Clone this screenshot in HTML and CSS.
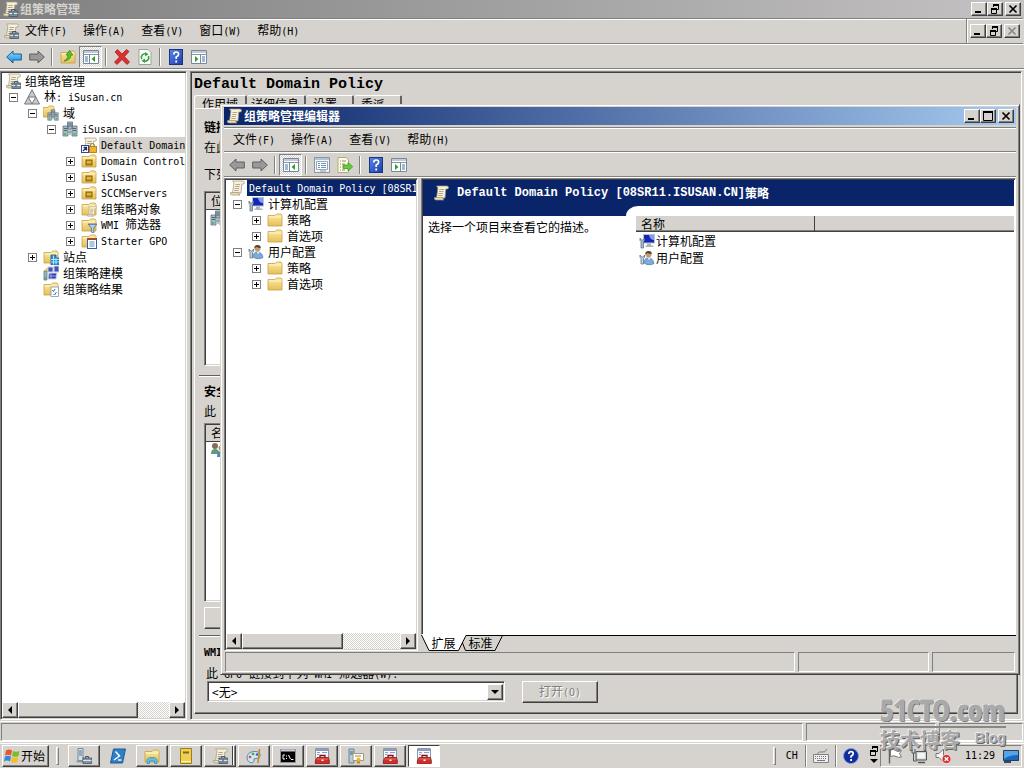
FILE: index.html
```html
<!DOCTYPE html>
<html lang="zh-CN">
<head>
<meta charset="utf-8">
<title>组策略管理</title>
<link rel="stylesheet" href="styles.css">
</head>
<body>
<svg class="defs" aria-hidden="true">
  <defs>
    <linearGradient id="gBlue" x1="0" y1="0" x2="0" y2="1"><stop offset="0" stop-color="#8fe0ff"/><stop offset="1" stop-color="#1a86d8"/></linearGradient>
    <linearGradient id="gFold" x1="0" y1="0" x2="0" y2="1"><stop offset="0" stop-color="#fdeba4"/><stop offset="1" stop-color="#e6bf58"/></linearGradient>
    <linearGradient id="gHelp" x1="0" y1="0" x2="1" y2="1"><stop offset="0" stop-color="#5b84ea"/><stop offset="1" stop-color="#1b3ea8"/></linearGradient>
  </defs>
  <symbol id="scroll" viewBox="0 0 16 16">
    <path d="M3.500 1h10.500q1.500 0 1.500 1.500t-1.500 1.500h-1.200L12 13H3.500L4.800 4Q5 1.800 3.500 1z" fill="#f8f0d8" stroke="#a0977c" stroke-width=".7"/>
    <path d="M1.500 12.500H10q-.5 2.500 1 2.500H3q-2 0-1.500-2.500z" fill="#eadcb0" stroke="#a0977c" stroke-width=".7"/>
    <path d="M6.500 4.500H11M6 6.500h4.500M5.600 8.500H10M5.200 10.500h4.500" stroke="#b0a892"/>
  </symbol>
  <symbol id="gpm" viewBox="0 0 16 16">
    <use href="#scroll"/>
    <path d="M9.500 10V8.500h3.500V10" fill="none" stroke="#4a5663"/>
    <rect x="7" y="10" width="8.500" height="5.500" fill="#7b8c9d" stroke="#4a5663" stroke-width=".8"/>
    <path d="M7 12.500h8.500" stroke="#dce4ea"/><path d="M11 11.500v2" stroke="#303a44"/>
  </symbol>
  <symbol id="folder" viewBox="0 0 16 16">
    <path d="M1 3.500h7l1.500-1.500h4.500l1 1.500V14H1z" fill="url(#gFold)" stroke="#c79f45" stroke-width=".8"/>
    <path d="M1.500 5h13" stroke="#fff6cc"/>
  </symbol>
  <symbol id="ou" viewBox="0 0 16 16"><use href="#folder"/><rect x="5" y="7" width="6" height="5" fill="#c49319" stroke="#8a6510"/><path d="M6 9h4" stroke="#f5da7c"/></symbol>
  <symbol id="servers" viewBox="0 0 16 16">
    <g fill="#a8bac4" stroke="#5d7382" stroke-width=".8"><path d="M5.500 1h5v7h-5zM1 5h5v10H1zM10 5h5v10h-5z"/></g>
    <path d="M6 3h4M6 5h4M2 7.500h3M2 9.500h3M11 7.500h3M11 9.500h3" stroke="#4d6776"/>
    <path d="M6 11h4M8 8v6" stroke="#708a98"/><circle cx="3" cy="13" r="1" fill="#2fbb3e"/><circle cx="12.500" cy="13" r="1" fill="#2fbb3e"/>
  </symbol>
  <symbol id="domains" viewBox="0 0 16 16">
    <path d="M0 2.500h5l1-1.500h4l1 1.500V12H0z" fill="url(#gFold)" stroke="#c79f45" stroke-width=".8"/>
    <svg x="4" y="4" width="12" height="12"><use href="#servers"/></svg>
  </symbol>
  <symbol id="forest" viewBox="0 0 16 16">
    <path d="M8 .7L15.500 15H.5z" fill="#c6cacd" stroke="#73797e"/><path d="M4.300 8h7.400L8 14.800z" fill="#fff" stroke="#73797e"/>
  </symbol>
  <symbol id="link" viewBox="0 0 16 16">
    <use href="#scroll"/><rect x=".5" y="8.500" width="7" height="7" fill="#fff" stroke="#3a4680"/><path d="M2 14l3-3M2.500 10.500h3V13.500" stroke="#1d2d86" stroke-width="1.300" fill="none"/>
    <path d="M9.500 10V8.500q0-2 2-2t2 2V10" fill="none" stroke="#8a8168"/><rect x="8.500" y="9.500" width="7" height="6" fill="#f0b429" stroke="#a86f10" stroke-width=".8"/>
  </symbol>
  <symbol id="gpos" viewBox="0 0 16 16"><use href="#folder"/><svg x="5" y="5" width="11" height="11"><use href="#scroll"/></svg></symbol>
  <symbol id="filter" viewBox="0 0 16 16"><use href="#folder"/><path d="M7 7h9l-3.200 4v5l-2.500-1v-4z" fill="#b8cfe4" stroke="#4c6f96" stroke-width=".8"/><path d="M7.500 7.500h8" stroke="#6288b5"/></symbol>
  <symbol id="starter" viewBox="0 0 16 16"><use href="#folder"/><rect x="6.500" y="5.500" width="9" height="10" fill="#fff" stroke="#2d62b0"/><path d="M6.500 6h9" stroke="#a44a2a" stroke-width="2"/><path d="M8.500 9h5M8.500 11h5M8.500 13h5" stroke="#5a8bd0"/></symbol>
  <symbol id="sites" viewBox="0 0 16 16"><use href="#folder"/><path d="M8 6h5v3h3v7H8z" fill="#1f93d8" stroke="#1560a0" stroke-width=".8"/><path d="M10.500 6.500v9M13 9v6.500M8 10.500h8M8 13h8" stroke="#d6f0ff" stroke-width=".8"/></symbol>
  <symbol id="model" viewBox="0 0 16 16"><path d="M1 5l4-3 3 1v4z" fill="#f0cd68"/><path d="M5 2h5v5H5zM11 1h5v6h-5z" fill="#4553b8" stroke="#c8d0dc"/><path d="M1 6h3v9H1z" fill="#a4b4be" stroke="#5d7382" stroke-width=".8"/><path d="M6 8h8l-1 6H5z" fill="#3040b0" stroke="#d0d8e4"/><path d="M8 8v6M5 11h8" stroke="#98a8e4"/><circle cx="2.500" cy="13" r="1" fill="#2fbb3e"/></symbol>
  <symbol id="result" viewBox="0 0 16 16"><use href="#folder"/><rect x="8" y="6" width="7.500" height="9.500" fill="#fff" stroke="#8496a8" stroke-width=".8"/><path d="M9.500 9l1 1.500L12 8M10.500 13l1 1 2-3" fill="none" stroke="#2f74bb"/></symbol>
  <symbol id="computer" viewBox="0 0 16 16"><rect x="4.500" y="1.500" width="11" height="8.500" fill="#1425b8" stroke="#b9c3d0"/><path d="M10 2h5v5q-4 0-5-5z" fill="#7f9ff6"/><path d="M8 10.500h4v2h2.500v1.500h-8v-1.500H8z" fill="#a9b3bc"/><path d="M1 5v2.500l1 1V15h2.500V8.500l1-1V5L4.300 7H2.300z" fill="#a9bccb" stroke="#50697d" stroke-width=".7"/></symbol>
  <symbol id="user" viewBox="0 0 16 16"><circle cx="9.500" cy="4.500" r="3" fill="#c99a6c"/><path d="M6.300 4.500Q6 1 9.500 1t3.200 3Q10 4 8.500 3z" fill="#53432f"/><path d="M5 13q0-5 4.500-5t5.500 5.500Q12 15.500 8 14.500z" fill="#7cabd8" stroke="#4a79ab" stroke-width=".7"/><path d="M9 8l1 2 1.500-2z" fill="#fff"/><path d="M1 5v2.500l1 1V14h2.500V8.500l1-1V5L4.300 7H2.300z" fill="#c1d3de" stroke="#50697d" stroke-width=".7"/></symbol>
  <symbol id="users" viewBox="0 0 16 16"><circle cx="5" cy="4" r="3" fill="#8a6a58"/><path d="M1 12q0-5 4-5t5 5z" fill="#5f9a7c"/><circle cx="11" cy="6" r="2.500" fill="#b98a60"/><path d="M7 15q0-6 4-6t4 6z" fill="#4f86c0"/></symbol>
  <symbol id="back" viewBox="0 0 16 16"><path d="M.7 8L7 2V5h8.300v6H7v3z" fill="url(#gBlue)" stroke="#11609e"/></symbol>
  <symbol id="backoff" viewBox="0 0 16 16"><path d="M.7 8L7 2V5h8.300v6H7v3z" fill="#999" stroke="#5e5e5e"/></symbol>
  <symbol id="fwdoff" viewBox="0 0 16 16"><path d="M15.300 8L9 2V5H.7v6H9v3z" fill="#999" stroke="#5e5e5e"/></symbol>
  <symbol id="up" viewBox="0 0 16 16"><use href="#folder"/><path d="M4 12q4-1 4-6H6l3.500-4.500L13 6h-2q0 5-7 6z" fill="#53c42c" stroke="#2a851a" stroke-width=".7"/></symbol>
  <symbol id="paneL" viewBox="0 0 16 16"><path d="M.5 1.500h15v13H.5z" fill="#fff" stroke="#7a8796"/><path d="M1 3h14M1 5.500h14" stroke="#8297ae"/><path d="M6.500 6v8" stroke="#7a8796"/><path d="M2 8h3M2 10h3M2 12h3" stroke="#3e72b0"/><path d="M12 7v6L8.500 10z" fill="#2ba32b"/></symbol>
  <symbol id="paneR" viewBox="0 0 16 16"><path d="M.5 1.500h15v13H.5z" fill="#fff" stroke="#7a8796"/><path d="M1 3h14M1 5.500h14" stroke="#8297ae"/><path d="M9.500 6v8" stroke="#7a8796"/><path d="M11 8h3M11 10h3M11 12h3" stroke="#3e72b0"/><path d="M4 7v6l3.500-3z" fill="#2ba32b"/></symbol>
  <symbol id="del" viewBox="0 0 16 16"><path d="M1 3l2.500-2.500L8 5l4.500-4.500L15 2.500 10.500 7.500 15.500 13 13 15.500 8 10.500 3 15.500 .5 13l5-5z" fill="#dd2e32" stroke="#9d1518" stroke-width=".7"/></symbol>
  <symbol id="refresh" viewBox="0 0 16 16"><path d="M2 .5h9L14 3.500v12H2z" fill="#fff" stroke="#9aa39a"/><path d="M4.800 10A3.500 3.500 0 0 1 9 5M11.300 7A3.500 3.500 0 0 1 6.500 11.700" fill="none" stroke="#33a53b" stroke-width="1.600"/><path d="M8 3l3.500 2.200L8.300 7.500zM8 9.500v4.500L4.500 11.800z" fill="#33a53b"/></symbol>
  <symbol id="help" viewBox="0 0 16 16"><rect x="1.500" y=".5" width="13" height="15" fill="url(#gHelp)" stroke="#183582"/><path d="M5.800 5.500Q5.800 3 8.200 3t2.400 2.200Q10.600 6.800 8.200 8v2" fill="none" stroke="#fff" stroke-width="1.700"/><path d="M7.300 11.500h1.800v2H7.300z" fill="#fff"/></symbol>
  <symbol id="props" viewBox="0 0 16 16"><path d="M.5 .5h15v15H.5z" fill="#f1f5f8" stroke="#8996a3"/><path d="M1 2h14" stroke="#b4c4d2" stroke-width="2"/><path d="M2.500 4.500h11v8h-11z" fill="#fff" stroke="#9aa8b4"/><path d="M4 6.500h2M7 6.500h5M4 8.500h2M7 8.500h5M4 10.500h2M7 10.500h5" stroke="#6398c6"/><path d="M6 14h6" stroke="#8996a3"/></symbol>
  <symbol id="export" viewBox="0 0 16 16"><path d="M1 .5h8L11.500 3v12.500H1z" fill="#fffbe4" stroke="#b3a97e"/><path d="M3 4h1M5 4h4M3 7h1M5 7h3M3 10h1M3 13h1M5 13h3" stroke="#8a8a70"/><path d="M6 8h5V5.500l4.800 4.200L11 14v-2.500H6z" fill="#67cc38" stroke="#32901e" stroke-width=".7"/></symbol>
  <symbol id="flagwin" viewBox="0 0 16 16"><path d="M2 2.500q3-2 6 0L7 7.500q-3-1.500-6 0z" fill="#e9562b"/><path d="M9 3q3 1.500 6.500 0l-1 5q-3 1.500-6.500 0z" fill="#7dba2d"/><path d="M1 8.500q3-1.500 6 0L6 13.500q-3-2-6 0z" fill="#3388dd"/><path d="M8 9q3 1.500 6.300 0l-1 5q-3 1.500-6.300 0z" fill="#f7bd22"/></symbol>
  <symbol id="srvbox" viewBox="0 0 16 16"><path d="M2 .5h5v12H2z" fill="#d4dfe8" stroke="#74889a"/><path d="M3 3h3M3 5h3M3 7h3" stroke="#54728c"/><path d="M.5 13.500h8" stroke="#8798a8" stroke-width="2"/><path d="M9.500 10V8.500h3V10" fill="none" stroke="#4a5663"/><rect x="7" y="10" width="8.500" height="5.500" fill="#8496a6" stroke="#4a5663" stroke-width=".8"/><path d="M7 12.500h8.500" stroke="#dce4ea"/></symbol>
  <symbol id="shell" viewBox="0 0 16 16"><path d="M3.500 1h12L12.500 15H.5z" fill="#2e7fc8" stroke="#1c5a97"/><path d="M5.500 3.500L9.500 8 4 12" fill="none" stroke="#fff" stroke-width="1.500"/><path d="M8 12h3.500" stroke="#fff" stroke-width="1.400"/></symbol>
  <symbol id="explorer" viewBox="0 0 16 16"><use href="#folder"/><path d="M3 15.500v-3q0-3 5-3t5 3v3h-2.500v-2.500h-5v2.500z" fill="#62c0e4" stroke="#2d86b0" stroke-width=".7"/></symbol>
  <symbol id="book" viewBox="0 0 16 16"><path d="M2.500 .5h11v15h-11z" fill="#efcf52" stroke="#9d7d1c"/><path d="M5 4.500h6" stroke="#7e6824" stroke-width="2"/><path d="M3 13.500h10" stroke="#fff4b0"/></symbol>
  <symbol id="paint" viewBox="0 0 16 16"><path d="M1 10Q1 4 8 3.500t6 5q-1 2.500-4 2t-2 2.500q-1 3-4 1.500T1 10z" fill="#cfe5f3" stroke="#5d8cab"/><circle cx="4" cy="9" r="1.300" fill="#df4535"/><circle cx="7" cy="6" r="1.300" fill="#45a53e"/><circle cx="11" cy="6.500" r="1.200" fill="#375fc0"/><path d="M12 15l1.500-14" stroke="#c88732" stroke-width="1.600"/></symbol>
  <symbol id="cmd" viewBox="0 0 16 16"><path d="M.5 1.500h15v13H.5z" fill="#000" stroke="#8d9298"/><path d="M1 2.500h14" stroke="#c8ccd4" stroke-width="2"/><path d="M5 7H3v4h2M6.500 7.500v1M6.500 10v1M8.500 7l2 4M11 11.500h2.500" fill="none" stroke="#fff"/></symbol>
  <symbol id="mmc" viewBox="0 0 16 16"><path d="M1.500 .5h13v12h-13z" fill="#f6f8fc" stroke="#8c99ad"/><path d="M2 2h12" stroke="#8c9dc0" stroke-width="2"/><path d="M3 4.500h3M8 4.500h5M3 6.500h2" stroke="#8c9dc0"/><path d="M6 9.500V7.500h5v2" fill="none" stroke="#7d1111" stroke-width="1.300"/><path d="M3 9.500h11.500q1.200 3 .8 6H1.200q-.4-3 1.800-6z" fill="#cf2e2b" stroke="#8e1515" stroke-width=".8"/><path d="M2.500 11h12" stroke="#e86a60"/><path d="M7.500 11.500h2v1.500h-2z" fill="#fff"/></symbol>
  <symbol id="cert" viewBox="0 0 16 16"><path d="M1 1h5v14H1z" fill="#b9cbd8" stroke="#698496"/><path d="M2 4h3M2 6h3" stroke="#456478"/><path d="M5 5.500h10.500v7H5z" fill="#fffdf0" stroke="#a19b79"/><path d="M7 8h6" stroke="#888"/><path d="M9 12v4l1.500-1 1.500 1v-4" fill="#d3861b"/><circle cx="10.500" cy="11.500" r="2" fill="#f1b42e"/></symbol>
  <symbol id="keyboard" viewBox="0 0 16 16"><path d="M.5 6.500h15v8H.5z" fill="#eee" stroke="#828282"/><path d="M2 8.500h12M2 10.500h12" stroke="#777" stroke-dasharray="1 1"/><path d="M4 12.500h8" stroke="#777"/><path d="M4 6Q6 3 9 4t5-3" fill="none" stroke="#828282"/></symbol>
  <symbol id="qball" viewBox="0 0 16 16"><circle cx="8" cy="8" r="7.500" fill="#102c9c" stroke="#7e96dc"/><path d="M5.800 6Q5.800 3.700 8 3.700t2.200 2Q10.200 7 8 8.200v1.500" fill="none" stroke="#fff" stroke-width="1.700"/><path d="M7.200 11H9v2H7.200z" fill="#fff"/></symbol>
  <symbol id="tflag" viewBox="0 0 16 16"><path d="M2.500 1v14.500" stroke="#666" stroke-width="1.500"/><path d="M3.500 2q3-1.500 5 .5t6 0L12.500 5.500 14.500 9q-3 1-5.500-.5T3.500 8.500z" fill="#fff" stroke="#777"/></symbol>
  <symbol id="net" viewBox="0 0 16 16"><path d="M5 3.500h10.500v8.500H5z" fill="#ccd1d4" stroke="#555"/><path d="M6.500 5h7.500v5.500H6.500z" fill="#f3f3f3"/><path d="M7 14.500h7" stroke="#555" stroke-width="1.500"/><path d="M1 1v4h3V1M2.500 5v8H6" fill="none" stroke="#555"/></symbol>
  <symbol id="mute" viewBox="0 0 16 16"><path d="M1 5.500h3L8.500 1v13L4 9.500H1z" fill="#f4f4f4" stroke="#777"/><circle cx="11.500" cy="11" r="4.500" fill="#dc2c2c" stroke="#fff" stroke-width=".7"/><path d="M9.700 9.200l3.600 3.600M13.300 9.200l-3.600 3.600" stroke="#fff" stroke-width="1.500"/></symbol>
  <symbol id="desk" viewBox="0 0 16 16"><path d="M.5 2.500h15v10H.5z" fill="#1868c0" stroke="#233c5c"/><path d="M1 3h14v4Q6 7 1 11z" fill="#56a5e6"/><path d="M1 12.500h7v2.500H1z" fill="#314b63"/></symbol>
  <symbol id="min" viewBox="0 0 10 10"><path d="M1 8h6" stroke="#000" stroke-width="2"/></symbol>
  <symbol id="max" viewBox="0 0 10 10"><path d="M.5 1h9v8.500h-9z" fill="none" stroke="#000"/><path d="M0 1h10" stroke="#000" stroke-width="2"/></symbol>
  <symbol id="restore" viewBox="0 0 10 10"><path d="M3.500 3V1h5v4.500H7" fill="none" stroke="#000"/><path d="M3 1h6" stroke="#000" stroke-width="2"/><path d="M1.500 4.500h5v5h-5z" fill="none" stroke="#000"/><path d="M1 5h6" stroke="#000" stroke-width="2"/></symbol>
  <symbol id="close" viewBox="0 0 10 10"><path d="M1.500 1.500l7 7M8.500 1.500l-7 7" stroke="currentColor" stroke-width="1.700"/></symbol>
  <symbol id="left" viewBox="0 0 10 10"><path d="M7 1v8L3 5z"/></symbol>
  <symbol id="right" viewBox="0 0 10 10"><path d="M3 1v8l4-4z"/></symbol>
  <symbol id="down" viewBox="0 0 10 10"><path d="M1 3h8L5 7z"/></symbol>
</svg>

<div class="app">
  <header class="titlebar inactive">
    <svg class="i"><use href="#gpm"/></svg><h1>组策略管理</h1>
    <div class="wbtns"><button class="wb" aria-label="最小化"><svg><use href="#min"/></svg></button><button class="wb" aria-label="还原"><svg><use href="#restore"/></svg></button><button class="wb last" aria-label="关闭"><svg><use href="#close"/></svg></button></div>
  </header>
  <nav class="menubar main-menu">
    <svg class="i"><use href="#gpm"/></svg>
    <button>文件<span class="en">(F)</span></button><button>操作<span class="en">(A)</span></button><button>查看<span class="en">(V)</span></button><button>窗口<span class="en">(W)</span></button><button>帮助<span class="en">(H)</span></button>
    <div class="wbtns mdi"><button class="wb" aria-label="最小化"><svg><use href="#min"/></svg></button><button class="wb" aria-label="还原"><svg><use href="#restore"/></svg></button><button class="wb last" aria-label="关闭" disabled><svg><use href="#close"/></svg></button></div>
  </nav>
  <div class="toolbar">
    <button aria-label="后退"><svg class="i"><use href="#back"/></svg></button><button aria-label="前进"><svg class="i"><use href="#fwdoff"/></svg></button><span class="sep"></span>
    <button aria-label="向上"><svg class="i"><use href="#up"/></svg></button><button class="on" aria-label="控制台树"><svg class="i"><use href="#paneL"/></svg></button><span class="sep"></span>
    <button aria-label="删除"><svg class="i"><use href="#del"/></svg></button><button aria-label="刷新"><svg class="i"><use href="#refresh"/></svg></button><span class="sep"></span>
    <button aria-label="帮助"><svg class="i"><use href="#help"/></svg></button><button aria-label="操作窗格"><svg class="i"><use href="#paneR"/></svg></button>
  </div>

  <main class="work">
    <section class="treepane sunken">
      <ul class="tree root">
        <li><div class="row"><svg class="i"><use href="#gpm"/></svg><span class="t">组策略管理</span></div>
          <ul>
            <li><div class="row"><button class="ex minus" aria-label="折叠"></button><svg class="i"><use href="#forest"/></svg><span class="t">林<span class="en">: iSusan.cn</span></span></div>
              <ul>
                <li><div class="row"><button class="ex minus" aria-label="折叠"></button><svg class="i"><use href="#domains"/></svg><span class="t">域</span></div>
                  <ul>
                    <li><div class="row"><button class="ex minus" aria-label="折叠"></button><svg class="i"><use href="#servers"/></svg><span class="t en">iSusan.cn</span></div>
                      <ul>
                        <li><div class="row"><span class="ex none"></span><svg class="i"><use href="#link"/></svg><span class="t en soft">Default Domain Policy</span></div></li>
                        <li><div class="row"><button class="ex" aria-label="展开"></button><svg class="i"><use href="#ou"/></svg><span class="t en">Domain Controllers</span></div></li>
                        <li><div class="row"><button class="ex" aria-label="展开"></button><svg class="i"><use href="#ou"/></svg><span class="t en">iSusan</span></div></li>
                        <li><div class="row"><button class="ex" aria-label="展开"></button><svg class="i"><use href="#ou"/></svg><span class="t en">SCCMServers</span></div></li>
                        <li><div class="row"><button class="ex" aria-label="展开"></button><svg class="i"><use href="#gpos"/></svg><span class="t">组策略对象</span></div></li>
                        <li><div class="row"><button class="ex" aria-label="展开"></button><svg class="i"><use href="#filter"/></svg><span class="t"><span class="en">WMI </span>筛选器</span></div></li>
                        <li><div class="row"><button class="ex" aria-label="展开"></button><svg class="i"><use href="#starter"/></svg><span class="t en">Starter GPO</span></div></li>
                      </ul></li>
                  </ul></li>
                <li><div class="row"><button class="ex" aria-label="展开"></button><svg class="i"><use href="#sites"/></svg><span class="t">站点</span></div></li>
                <li><div class="row"><span class="ex none"></span><svg class="i"><use href="#model"/></svg><span class="t">组策略建模</span></div></li>
                <li><div class="row"><span class="ex none"></span><svg class="i"><use href="#result"/></svg><span class="t">组策略结果</span></div></li>
              </ul></li>
          </ul></li>
      </ul>
      <div class="hscroll"><button class="sb" aria-label="向左"><svg><use href="#left"/></svg></button><span class="thumb wide"></span><span class="track"></span><button class="sb" aria-label="向右"><svg><use href="#right"/></svg></button></div>
    </section>

    <section class="detail">
      <h2>Default Domain Policy</h2>
      <div class="tabs"><button class="cur">作用域</button><button>详细信息</button><button>设置</button><button>委派</button></div>
      <div class="page">
        <div class="group links">
          <h3>链接</h3>
          <p>在此位置内显示链接<span class="en">(L):</span></p>
          <p class="lower">下列站点、域和<span class="en"> OU </span>链接到此<span class="en"> GPO(T):</span></p>
          <div class="list sunken"><div class="lhead">位置</div><svg class="i"><use href="#servers"/></svg></div>
        </div>
        <div class="group secure">
          <h3>安全筛选</h3>
          <p>此<span class="en"> GPO </span>内的设置只应用于下列组、用户和计算机<span class="en">(S):</span></p>
          <div class="list sunken"><div class="lhead">名称</div><svg class="i"><use href="#users"/></svg></div>
          <button class="btn add" aria-label="添加"></button>
        </div>
        <div class="group wmi">
          <h3><span class="en">WMI</span> 筛选</h3>
          <label for="wmi">此<span class="en"> GPO </span>链接到下列<span class="en"> WMI </span>筛选器<span class="en">(W):</span></label>
          <div class="pick">
            <div class="combo sunken"><select id="wmi"><option>&lt;无&gt;</option></select><span class="sb"><svg><use href="#down"/></svg></span></div>
            <button class="btn" disabled>打开<span class="en">(O)</span></button>
          </div>
        </div>
      </div>
    </section>
  </main>

  <div class="status outer"><span></span><span></span><span></span></div>

  <footer class="taskbar">
    <button class="start"><svg class="i"><use href="#flagwin"/></svg>开始</button>
    <span class="grip"></span>
    <div class="tasks">
      <button class="task" aria-label="服务器管理器"><svg class="i"><use href="#srvbox"/></svg></button>
      <button class="task flat" aria-label="PowerShell"><svg class="i"><use href="#shell"/></svg></button>
      <button class="task" aria-label="资源管理器"><svg class="i"><use href="#explorer"/></svg></button>
      <button class="task" aria-label="文档"><svg class="i"><use href="#book"/></svg></button>
      <button class="task stack" aria-label="组策略管理"><svg class="i"><use href="#gpm"/></svg></button>
      <button class="task" aria-label="画图"><svg class="i"><use href="#paint"/></svg></button>
      <button class="task" aria-label="命令提示符"><svg class="i"><use href="#cmd"/></svg></button>
      <button class="task" aria-label="控制台"><svg class="i"><use href="#mmc"/></svg></button>
      <button class="task" aria-label="证书"><svg class="i"><use href="#cert"/></svg></button>
      <button class="task" aria-label="控制台"><svg class="i"><use href="#mmc"/></svg></button>
      <button class="task down" aria-label="控制台"><svg class="i"><use href="#mmc"/></svg></button>
    </div>
    <div class="lang"><span class="grip"></span><span class="en">CH</span><span class="bar"></span><svg class="i"><use href="#keyboard"/></svg><span class="bar"></span><svg class="i"><use href="#qball"/></svg><span class="mini"><svg><use href="#restore"/></svg><svg><use href="#down"/></svg></span></div>
    <div class="tray"><svg class="i"><use href="#tflag"/></svg><svg class="i"><use href="#net"/></svg><svg class="i"><use href="#mute"/></svg><time class="en">11:29</time><svg class="i"><use href="#desk"/></svg></div>
  </footer>

  <section class="editor">
    <header class="titlebar active">
      <svg class="i"><use href="#scroll"/></svg><h1>组策略管理编辑器</h1>
      <div class="wbtns"><button class="wb" aria-label="最小化"><svg><use href="#min"/></svg></button><button class="wb" aria-label="最大化"><svg><use href="#max"/></svg></button><button class="wb last" aria-label="关闭"><svg><use href="#close"/></svg></button></div>
    </header>
    <nav class="menubar"><button>文件<span class="en">(F)</span></button><button>操作<span class="en">(A)</span></button><button>查看<span class="en">(V)</span></button><button>帮助<span class="en">(H)</span></button></nav>
    <div class="toolbar">
      <button aria-label="后退"><svg class="i"><use href="#backoff"/></svg></button><button aria-label="前进"><svg class="i"><use href="#fwdoff"/></svg></button><span class="sep"></span>
      <button class="on" aria-label="控制台树"><svg class="i"><use href="#paneL"/></svg></button><span class="sep"></span>
      <button aria-label="属性"><svg class="i"><use href="#props"/></svg></button><button aria-label="导出列表"><svg class="i"><use href="#export"/></svg></button><span class="sep"></span>
      <button aria-label="帮助"><svg class="i"><use href="#help"/></svg></button><button aria-label="操作窗格"><svg class="i"><use href="#paneR"/></svg></button>
    </div>
    <div class="split">
      <div class="treepane sunken">
        <ul class="tree root">
          <li><div class="row"><svg class="i"><use href="#scroll"/></svg><span class="t en sel">Default Domain Policy [08SR11.ISUSAN.CN]</span></div>
            <ul>
              <li><div class="row"><button class="ex minus" aria-label="折叠"></button><svg class="i"><use href="#computer"/></svg><span class="t">计算机配置</span></div>
                <ul>
                  <li><div class="row"><button class="ex" aria-label="展开"></button><svg class="i"><use href="#folder"/></svg><span class="t">策略</span></div></li>
                  <li><div class="row"><button class="ex" aria-label="展开"></button><svg class="i"><use href="#folder"/></svg><span class="t">首选项</span></div></li>
                </ul></li>
              <li><div class="row"><button class="ex minus" aria-label="折叠"></button><svg class="i"><use href="#user"/></svg><span class="t">用户配置</span></div>
                <ul>
                  <li><div class="row"><button class="ex" aria-label="展开"></button><svg class="i"><use href="#folder"/></svg><span class="t">策略</span></div></li>
                  <li><div class="row"><button class="ex" aria-label="展开"></button><svg class="i"><use href="#folder"/></svg><span class="t">首选项</span></div></li>
                </ul></li>
            </ul></li>
        </ul>
        <div class="hscroll"><button class="sb" aria-label="向左"><svg><use href="#left"/></svg></button><span class="thumb"></span><span class="track"></span><button class="sb" aria-label="向右"><svg><use href="#right"/></svg></button></div>
      </div>
      <div class="view">
        <div class="content">
          <div class="banner"><div class="cap"><svg class="i"><use href="#scroll"/></svg><span class="ben">Default Domain Policy [08SR11.ISUSAN.CN]</span><b>策略</b></div><div class="curve"></div></div>
          <div class="cols">
            <p class="desc">选择一个项目来查看它的描述。</p>
            <table>
              <thead><tr><th scope="col">名称</th><td></td></tr></thead>
              <tbody>
                <tr><td><svg class="i"><use href="#computer"/></svg>计算机配置</td><td></td></tr>
                <tr><td><svg class="i"><use href="#user"/></svg>用户配置</td><td></td></tr>
              </tbody>
            </table>
          </div>
        </div>
        <div class="btabs">
          <svg width="10" height="16" viewBox="0 0 10 16"><path d="M0 0h10v15H8z" fill="#fff"/><path d="M.5 0L8 15.500h2" fill="none" stroke="#000"/></svg>
          <button class="cur">扩展</button>
          <svg width="12" height="16" viewBox="0 0 12 16"><path d="M0 0h10L3 15H0z" fill="#fff"/><path d="M0 15.500h2.500L10 .5h2M6.500 8l3 7.500H12" fill="none" stroke="#000"/></svg>
          <button>标准</button>
          <svg width="11" height="16" viewBox="0 0 11 16"><path d="M0 15.500h2L9.500 .5M0 .5h11" fill="none" stroke="#000"/></svg>
          <span class="rule"></span>
        </div>
      </div>
    </div>
    <div class="status inner"><span></span><span></span><span></span></div>
  </section>

  <aside class="mark"><strong>51CTO.com</strong><div><span>技术博客</span><em>Blog</em></div></aside>
</div>
</body>
</html>
```
FILE: styles.css
```css
* { box-sizing: border-box; }
body {
  margin: 0;
  background: #d6d3ce;
  color: #000;
  font: 12px/16px "Noto Sans CJK SC", sans-serif;
}
.defs { position: absolute; width: 0; height: 0; }
.en { font-family: "DejaVu Sans Mono", "Noto Sans CJK SC", monospace; font-size: 10px; }
button {
  font: inherit;
  color: inherit;
  background: none;
  border: 0;
  padding: 0;
  white-space: nowrap;
}
h1, h2, h3, p, ul { margin: 0; padding: 0; font-size: inherit; }
ul { list-style: none; }
.i { width: 16px; height: 16px; flex: none; display: block; }

.app {
  position: relative;
  display: flex;
  flex-direction: column;
  height: 100vh;
  overflow: hidden;
}
.sunken {
  background: #fff;
  border: 1px solid;
  border-color: #808080 #fff #fff #808080;
  box-shadow: inset 1px 1px #404040, inset -1px -1px #d6d3ce;
}
.btn, .wb, .sb, .thumb, .task, .start {
  background: #d6d3ce;
  border: 1px solid;
  border-color: #fff #404040 #404040 #fff;
  box-shadow: inset -1px -1px #808080;
}

/* title bars */
.titlebar { display: flex; align-items: center; height: 18px; flex: none; }
.titlebar h1 { flex: 1; font-size: 12px; line-height: 18px; margin-left: 2px; }
.titlebar.inactive { padding: 0 3px 0 2px; background: linear-gradient(90deg, #808080, #c4c2c2); color: #d6d3ce; }
.titlebar.active { padding: 0 2px 0 2px; background: linear-gradient(90deg, #0a246a, #a6caf0); color: #fff; }
.wbtns { display: flex; align-items: center; }
.wb { width: 16px; height: 14px; display: flex; align-items: center; justify-content: center; color: #000; }
.wb svg { width: 10px; height: 10px; flex: none; }
.wb.last { margin-left: 2px; }
.wb:disabled { color: #888; }

/* menus and tool bars */
.menubar {
  display: flex;
  align-items: center;
  gap: 16px;
  height: 24px;
  flex: none;
  padding-left: 9px;
  border-top: 1px solid #fff;
  border-bottom: 1px solid #808080;
}
.main-menu { height: 26px; padding: 0 3px; border-top: 1px solid #808080; box-shadow: inset 0 1px #fff; margin-right: 1px; }
.main-menu > .i { margin-right: -10px; }
.mdi { margin-left: auto; height: 100%; border-left: 1px solid #808080; box-shadow: inset 1px 0 #fff; padding-left: 3px; }
.toolbar {
  display: flex;
  align-items: center;
  height: 25px;
  flex: none;
  padding-left: 2px;
  border-top: 1px solid #fff;
  border-bottom: 1px solid #808080;
  box-shadow: 0 1px #fff;
}
.toolbar button { width: 23px; height: 22px; display: flex; align-items: center; justify-content: center; }
.toolbar .on {
  border: 1px solid;
  border-color: #808080 #fff #fff #808080;
  background: repeating-conic-gradient(#fff 0 25%, #d6d3ce 0 50%) 0 0 / 2px 2px;
}
.sep { width: 2px; height: 18px; margin: 0 3px; border-left: 1px solid #808080; border-right: 1px solid #fff; }

/* tree panes */
.work { flex: 1; display: flex; min-height: 0; gap: 3px; padding-top: 2px; margin-bottom: 1px; }
.treepane { display: flex; flex-direction: column; justify-content: space-between; min-height: 0; padding: 1px; overflow: hidden; }
.work > .treepane { width: 187px; flex: none; }
.root { padding-left: 3px; overflow: hidden; }
.row { display: flex; align-items: center; height: 16px; white-space: nowrap; }
.row .t { padding-left: 4px; }
.row .t.en { padding-top: 2px; line-height: 14px; }
.ex {
  width: 9px;
  height: 9px;
  margin: 0 6px 0 4px;
  flex: none;
  border: 1px solid #808080;
  background:
    linear-gradient(#000, #000) center / 5px 1px no-repeat,
    linear-gradient(#000, #000) center / 1px 5px no-repeat,
    #fff;
}
.minus { background: linear-gradient(#000, #000) center / 5px 1px no-repeat, #fff; }
.none { visibility: hidden; }
.tree ul ul { margin-left: 19px; }
.row .soft { background: #d6d3ce; margin-left: 2px; padding-left: 2px; }
.row .sel { background: #0a246a; color: #fff; margin-left: 2px; padding-left: 2px; flex: 1; }
.hscroll { display: flex; height: 16px; flex: none; }
.sb { width: 16px; height: 16px; flex: none; display: flex; align-items: center; justify-content: center; }
.sb svg { width: 10px; height: 10px; flex: none; }
.thumb { flex: 0 1 101px; }
.thumb.wide { flex-basis: 120px; }
.track { flex: 1; background: repeating-conic-gradient(#fff 0 25%, #d6d3ce 0 50%) 0 0 / 2px 2px; }

/* policy details */
.detail {
  flex: 1;
  min-width: 0;
  display: flex;
  flex-direction: column;
  padding: 2px 3px 5px 3px;
  margin-right: 2px;
  border: 1px solid;
  border-color: #808080 #fff #fff #808080;
  box-shadow: inset 1px 1px #404040;
}
.detail h2 { font: bold 15px/21px "Liberation Mono", monospace; }
.tabs { display: flex; height: 13px; }
.tabs button {
  height: 13px;
  overflow: hidden;
  padding: 0 5px 0 4px;
  border-top: 1px solid #fff;
  border-right: 2px solid #606060;
  border-radius: 3px 2px 0 0;
  line-height: 16px;
}
.tabs .cur { padding: 0 7px; border-left: 1px solid #fff; }
.tabs button:nth-child(n+3) { padding: 0 15px 0 7px; }
.page {
  flex: 1;
  display: flex;
  flex-direction: column;
  min-height: 0;
  padding: 4px 4px 10px;
  border: 1px solid;
  border-color: #fff #404040 #404040 #fff;
  box-shadow: inset -1px -1px #808080;
  white-space: nowrap;
}
.group { display: flex; flex-direction: column; padding: 4px 4px 6px 5px; border-bottom: 2px solid #606060; box-shadow: 0 -1px #fff; }
.group p { line-height: 20px; }
.group h3 { line-height: 20px; font-size: 12px; }
.links { flex: 1; padding-bottom: 9px; box-shadow: none; }
.group .lower { line-height: 30px; }
.secure { flex: 1; }
.list { flex: 1; padding: 1px; }
.lhead { height: 17px; padding-left: 5px; background: #d6d3ce; border-bottom: 1px solid #404040; }
.list .i { margin-left: 4px; }
.btn { height: 22px; width: 76px; }
.btn:disabled { color: #808080; text-shadow: 1px 1px #fff; }
.add { margin-top: 5px; }
.wmi { border-bottom: 0; padding-bottom: 0; }
.wmi h3 { margin-bottom: 4px; }
.wmi label { padding-left: 2px; line-height: 12px; }
.pick { display: flex; gap: 17px; padding-left: 3px; }
.combo { width: 298px; height: 21px; display: flex; align-items: center; padding: 1px; }
.combo select { appearance: none; flex: 1; border: 0; background: none; padding: 0 3px; font: inherit; line-height: 16px; color: #000; }

/* status bars */
.status { display: grid; gap: 3px; flex: none; height: 20px; padding: 0 1px; }
.status span { border: 1px solid; border-color: #808080 #fff #fff #808080; }
.outer { grid-template-columns: 1fr 130px 84px; border-top: 1px solid #fff; padding-top: 1px; }
.inner { grid-template-columns: 1fr 131px 83px; margin-top: 1px; }

/* task bar */
.taskbar { display: flex; align-items: center; height: 27px; flex: none; border-top: 1px solid #fff; box-shadow: inset 0 1px #d6d3ce, inset 0 2px #fff; padding: 2px 2px 0; }
.start { display: flex; align-items: center; width: 47px; height: 22px; padding-left: 1px; gap: 1px; }
.grip { width: 3px; height: 18px; border: 1px solid; border-color: #fff #808080 #808080 #fff; flex: none; }
.start + .grip { margin: 0 9px 0 7px; }
.tasks { display: flex; gap: 2px; flex: 1; }
.task { width: 32px; height: 22px; display: flex; align-items: center; justify-content: center; }
.flat { border-color: transparent; box-shadow: none; }
.stack { box-shadow: inset -1px -1px #808080, inset -2px 0 #fff, inset -3px 0 #404040; }
.down { background: #fff; border-color: #404040 #fff #fff #404040; box-shadow: none; }
.lang { display: flex; align-items: center; gap: 6px; }
.lang .en { padding: 0 1px 0 4px; }
.bar { width: 2px; height: 22px; border-left: 1px solid #808080; border-right: 1px solid #fff; }
.mini { display: flex; flex-direction: column; margin: 0 1px 0 4px; }
.mini svg { width: 10px; height: 10px; }
.tray { display: flex; align-items: center; gap: 8px; height: 22px; padding: 0 2px 0 6px; border: 1px solid; border-color: #808080 #fff #fff #808080; }
.tray time { padding: 0 0 0 6px; }

/* editor window, floating over the console */
.editor {
  position: absolute;
  left: 220px;
  right: 4px;
  top: 104px;
  bottom: 93px;
  display: flex;
  flex-direction: column;
  padding: 2px 3px;
  background: #d6d3ce;
  border: 1px solid;
  border-color: #d6d3ce #404040 #404040 #d6d3ce;
  box-shadow: inset 1px 1px #fff, inset -1px -1px #808080;
}
.editor .menubar { margin-top: 2px; height: 25px; border-top: 1px solid #808080; box-shadow: inset 0 1px #fff; }
.editor .toolbar { height: 25px; padding-left: 1px; }
.split { flex: 1; display: flex; gap: 3px; min-height: 0; padding-top: 1px; }
.split .treepane { width: 194px; flex: none; }
.view { flex: 1; min-width: 0; display: flex; flex-direction: column; }
.content { flex: 1; min-height: 0; background: #fff; border: 1px solid; border-color: #808080 #fff #fff #808080; box-shadow: inset 1px 1px #404040; padding: 1px; }
.banner { background: #0a246a; height: 36px; display: flex; flex-direction: column; justify-content: space-between; }
.cap { display: flex; align-items: center; padding: 2px 0 0 10px; height: 24px; color: #fff; white-space: nowrap; }
.cap .i { margin-right: 8px; }
.ben { font: bold 12px/16px "Liberation Mono", monospace; }
.curve { height: 10px; margin-left: 203px; background: #fff; border-top-left-radius: 12px 10px; }
.cols { display: flex; }
.desc { width: 213px; flex: none; padding: 3px 0 0 5px; }
table { flex: 1; display: block; border-collapse: collapse; }
thead, tbody { display: block; }
tr { display: flex; height: 17px; align-items: center; }
th, td { padding: 0 0 0 5px; text-align: left; font-weight: normal; display: flex; align-items: center; gap: 1px; width: 179px; }
td:last-child { flex: 1; align-self: stretch; padding: 0; }
tbody td { padding-left: 3px; }
thead tr { background: #d6d3ce; height: 16px; border-bottom: 1px solid #404040; box-shadow: inset 0 -1px #808080; }
th { border-right: 1px solid #404040; height: 15px; line-height: 15px; }
.btabs { display: flex; height: 16px; flex: none; }
.btabs button { height: 16px; line-height: 14px; width: 25px; border-bottom: 1px solid #000; border-top: 1px solid #000; }
.btabs svg { flex: none; }
.btabs .cur { background: #fff; border-top-color: #fff; }
.rule { flex: 1; border-top: 1px solid #000; }

/* site mark */
.mark {
  position: absolute;
  right: 18px;
  bottom: 16px;
  width: 126px;
  color: #a9a9a9;
  text-shadow: -1px -1px #eee, 1px 1px #666;
}
.mark strong { display: block; font: bold 29px/32px "Liberation Sans Narrow", "Open Sans Condensed", "Liberation Sans", sans-serif; -webkit-text-stroke: 1px #a9a9a9; border-bottom: 2px solid #888; }
.mark div { display: flex; justify-content: space-between; line-height: 24px; }
.mark span { font-size: 20px; font-weight: bold; }
.mark em { font: bold 14px/20px "Liberation Sans", sans-serif; }
```
